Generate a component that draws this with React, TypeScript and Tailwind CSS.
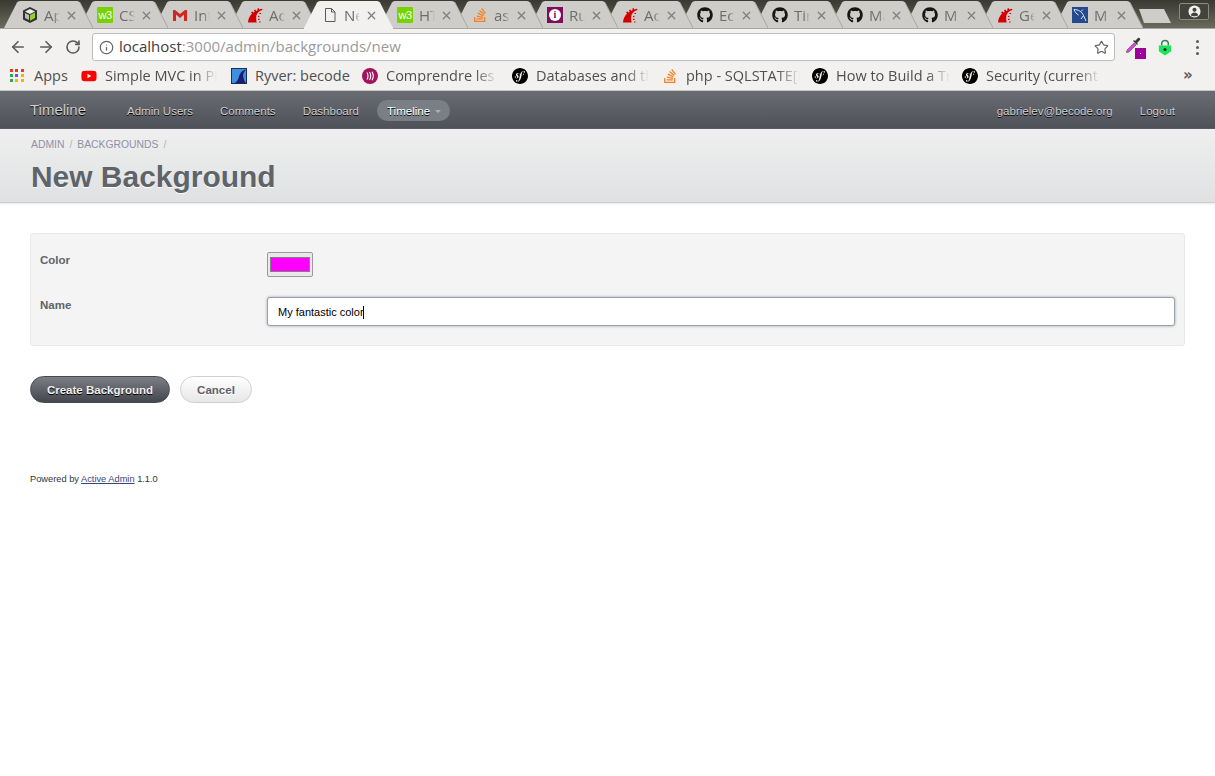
import React from "react";
import { ArrowLeft, ArrowRight, RotateCw, Info, Star, X } from "lucide-react";
import { FaGithub, FaStackOverflow, FaYoutube } from "react-icons/fa";
import { SiSymfony } from "react-icons/si";

const W3 = () => (
  <span className="flex h-4 w-4 items-center justify-center rounded-[1px] bg-[#76d300] text-[11px] leading-none tracking-[-0.5px] text-white [font-family:'Liberation_Sans',sans-serif]">w3</span>
);
const Gmail = () => (
  <svg viewBox="0 0 16 16" className="h-4 w-4">
    <path d="M1 3h2l5 4 5-4h2v11h-3V7.5L8 11 4 7.5V14H1z" fill="#d0281f" />
  </svg>
);
const Rails = () => (
  <svg viewBox="0 0 16 16" className="h-4 w-4">
    <path d="M1 15.5C1.3 11.5 3 8.5 5 6.6L4 5.2 5.4 4.4 6.6 5.6 7.6 4.9 7 3.2 8.5 2.5 9.2 4 10.5 3.3 10.4 1.6 12 1.2 12.2 2.6 15 1.8 15.6 2.9C12.3 3.7 10.3 5.6 9.5 8 8.9 10.6 9.1 13.2 9.7 15.5z" fill="#d30001" />
    <path d="M12.4 6.5h1.6M11 9.2l1.4.5M11 12.4h1.5M12 15h1.5" stroke="#d30001" strokeWidth="1.1" />
  </svg>
);
const Doc = () => (
  <svg viewBox="0 0 16 16" className="h-4 w-4" fill="none" stroke="#5a5a5a" strokeWidth="1">
    <path d="M3.5 1.5h6l3.5 3.5v9.5h-9.5zM9.5 1.5V5H13" />
  </svg>
);
const Box = () => (
  <svg viewBox="0 0 16 16" className="h-4 w-4">
    <path d="M8 0l7 3.5v9L8 16l-7-3.5v-9z" fill="#333" />
    <path d="M8 2l5 2.5L8 7 3 4.5z" fill="#eee" />
    <path d="M8 8l5-2.5v5.6L8 13.8z" fill="#9acd32" />
    <path d="M3 6l4 2v5l-4-2z" fill="#bbb" />
  </svg>
);
const InfoSq = () => (
  <span className="flex h-4 w-4 items-center justify-center bg-[#7b0f5e]">
    <span className="flex h-3 w-3 items-center justify-center rounded-full bg-white text-[10px] font-bold leading-none text-[#7b0f5e] [font-family:'Liberation_Serif',serif]">i</span>
  </span>
);
const Gh = () => <FaGithub className="h-4 w-4 text-[#161614]" />;
const My = () => (
  <svg viewBox="0 0 16 16" className="h-4 w-4">
    <rect width="16" height="16" fill="#234a8f" />
    <path d="M2 2.5C6 2.5 10 4.5 11.5 8.5L14 14M2 2.5C3 5 4.5 7 6.5 8M9 4.5L11 2.5M11.5 8.5L9 12" fill="none" stroke="#dfe6f2" strokeWidth="1" />
  </svg>
);
const So = () => <FaStackOverflow className="h-4 w-4 text-[#f48024]" />;

const tabs: { icon: React.ReactNode; t: string; active?: boolean }[] = [
  { icon: <Box />, t: "Ap" },
  { icon: <W3 />, t: "CS" },
  { icon: <Gmail />, t: "Int" },
  { icon: <Rails />, t: "Ac" },
  { icon: <Doc />, t: "Ne", active: true },
  { icon: <W3 />, t: "HT" },
  { icon: <So />, t: "as" },
  { icon: <InfoSq />, t: "Ru" },
  { icon: <Rails />, t: "Ac" },
  { icon: <Gh />, t: "Ec" },
  { icon: <Gh />, t: "Tir" },
  { icon: <Gh />, t: "Ma" },
  { icon: <Gh />, t: "M" },
  { icon: <Rails />, t: "Ge" },
  { icon: <My />, t: "M" },
];

function Tab({ icon, t, active, z }: { icon: React.ReactNode; t: string; active?: boolean; z: number }) {
  return (
    <div className="relative -mr-[14px] h-[28px] w-[89px] shrink-0" style={{ zIndex: z }}>
      <svg viewBox="0 0 89 28" className="absolute inset-0 h-full w-full">
        <path d="M0 28L13 2.5Q14 1 16 1H73Q75 1 76 2.5L89 28Z" fill={active ? "#f2f1f0" : "#cfcdca"} />
        {!active && <path d="M76 2.5L89 28" stroke="#a8a6a2" strokeWidth="1" fill="none" />}
      </svg>
      {active && <span className="absolute -bottom-px left-0 right-0 h-px bg-[#f2f1f0]" />}
      <div className="relative flex h-full items-center pl-[18px] pt-[2px]">
        <span className="flex h-4 w-4 shrink-0 items-center justify-center">{icon}</span>
        <span className="ml-[6px] w-[16px] overflow-hidden whitespace-nowrap text-[15px] leading-none text-[#6d6d6d] [font-family:'Open_Sans',sans-serif] [mask-image:linear-gradient(to_right,black_60%,transparent)]">{t}</span>
        <X className="ml-[5px] h-[13px] w-[13px] text-[#7d7d7d]" strokeWidth={2.2} />
      </div>
    </div>
  );
}

const AppsIcon = () => (
  <div className="grid h-[14px] w-[14px] grid-cols-3 gap-[2px]">
    {["#e33b2e", "#e33b2e", "#e33b2e", "#2fa84f", "#5b5be0", "#f5b400", "#2fa84f", "#f5b400", "#f5b400"].map((c, i) => (
      <span key={i} className="h-[3px] w-[3px]" style={{ background: c }} />
    ))}
  </div>
);

const Sym = () => <SiSymfony className="h-4 w-4 text-black" />;

function Bookmark({ icon, text, w, tw }: { icon: React.ReactNode; text: string; w: string; tw: string }) {
  return (
    <div className={`flex shrink-0 items-center ${w}`}>
      <span className="flex h-4 w-4 shrink-0 items-center justify-center">{icon}</span>
      <span className={`ml-[8px] overflow-hidden whitespace-nowrap text-[14.5px] text-[#4f4f4f] [font-family:'Open_Sans',sans-serif] ${tw}`}>{text}</span>
    </div>
  );
}

const FADE = "[mask-image:linear-gradient(to_right,black_80%,transparent)]";

export default function App() {
  return (
    <div className="min-h-screen bg-white text-[11.52px] text-[#323537] [font-family:'Liberation_Sans',Arial,sans-serif]">
      {/* Browser tab strip */}
      <div className="relative flex h-[29px] items-start border-b border-[#a9a7a4] bg-gradient-to-b from-[#3a3932] to-[#6a6a5c] pl-[4px]">
        {tabs.map((tb, i) => (
          <Tab key={i} icon={tb.icon} t={tb.t} active={tb.active} z={tb.active ? 50 : 40 - i} />
        ))}
        <svg viewBox="0 0 34 16" className="ml-[10px] mt-[8px] h-[16px] w-[34px] shrink-0">
          <path d="M0 1h25l7 14H5z" fill="#cfcdca" />
        </svg>
        <div className="ml-[6px] mt-[3px] flex h-[17px] w-[30px] shrink-0 items-center justify-center rounded-[2px] border border-[#8b8a80] bg-[#44433b]">
          <svg viewBox="0 0 14 14" className="h-[13px] w-[13px]">
            <circle cx="7" cy="7" r="6.5" fill="#f2f1f0" />
            <circle cx="7" cy="5.2" r="2.2" fill="#44433b" />
            <path d="M3 11c.6-2.2 2-3 4-3s3.4.8 4 3c-2 1.6-6 1.6-8 0z" fill="#44433b" />
          </svg>
        </div>
      </div>

      {/* Toolbar */}
      <div className="flex h-[34px] items-center bg-[#f2f1f0] pl-[9px] pr-[12px] pt-[2px]">
        <ArrowLeft className="h-[18px] w-[18px] text-[#5a5a5a]" strokeWidth={2.2} />
        <ArrowRight className="ml-[10px] h-[18px] w-[18px] text-[#5a5a5a]" strokeWidth={2.2} />
        <RotateCw className="ml-[10px] h-[16px] w-[16px] text-[#5a5a5a]" strokeWidth={2.4} />
        <div className="ml-[11px] flex h-[28px] w-[1023px] shrink-0 items-center rounded-[3px] border border-[#bdbdbd] bg-white pl-[6px] pr-[5px]">
          <Info className="h-[15px] w-[15px] text-[#666]" strokeWidth={2} />
          <span className="ml-[5px] pb-[1px] text-[15px] text-[#3c3c3c] [font-family:'Open_Sans',sans-serif]">
            localhost<span className="text-[#9a9a9a]">:3000/admin/backgrounds/new</span>
          </span>
          <Star className="ml-auto h-[15px] w-[15px] text-[#5f5f5f]" strokeWidth={1.8} />
        </div>
        <div className="relative ml-[10px] h-[22px] w-[20px]">
          <svg viewBox="0 0 18 18" className="h-[18px] w-[18px]">
            <path d="M1.5 16.5l.5-2.5 7-7 2 2-7 7z" fill="#e83ce8" stroke="#666" strokeWidth=".8" />
            <path d="M10 5l3-3c1-1 3 1 2 2l-3 3 1 1-1 1-4-4 1-1z" fill="#3a3a3a" />
          </svg>
          <span className="absolute bottom-[-1px] right-[-1px] flex h-[11px] w-[11px] items-center justify-center bg-[#a0009c]">
            <span className="h-[1px] w-[1px] bg-white" />
          </span>
        </div>
        <svg viewBox="0 0 14 18" className="ml-[13px] h-[17px] w-[14px]">
          <path d="M3.5 7V5a3.5 3.5 0 017 0v2" fill="none" stroke="#3f7f55" strokeWidth="1.6" />
          <path d="M0.5 7h13v6l-6.5 4.5L.5 13z" fill="#19e45a" />
          <circle cx="7" cy="11" r="1.6" fill="#222" />
        </svg>
        <div className="ml-[24px] flex flex-col gap-[3px]">
          <span className="h-[3px] w-[3px] rounded-full bg-[#5a5a5a]" />
          <span className="h-[3px] w-[3px] rounded-full bg-[#5a5a5a]" />
          <span className="h-[3px] w-[3px] rounded-full bg-[#5a5a5a]" />
        </div>
      </div>

      {/* Bookmarks */}
      <div className="flex h-[28px] items-center border-b border-[#c4c4c2] bg-[#f2f1f0] pb-[2px] pl-[9px]">
        <Bookmark icon={<AppsIcon />} text="Apps" w="w-[72px]" tw="pl-[1px]" />
        <Bookmark icon={<FaYoutube className="h-4 w-4 text-[#f00]" />} text="Simple MVC in PHP" w="w-[150px]" tw={`w-[112px] ${FADE}`} />
        <Bookmark
          icon={
            <svg viewBox="0 0 16 16" className="h-4 w-4">
              <rect x=".5" y=".5" width="15" height="15" fill="#3d8fe0" stroke="#16305c" />
              <path d="M3 15C6.5 14.5 7.5 10 8.5 7 9.5 4.5 11.5 2 15 1.5 12.5 4 11.5 7 12.5 10 13 12.5 14 14 15 15z" fill="#1d1d70" />
            </svg>
          }
          text="Ryver: becode"
          w="w-[131px]"
          tw=""
        />
        <Bookmark
          icon={
            <svg viewBox="0 0 16 16" className="h-4 w-4" fill="none" stroke="#fff" strokeWidth="1.1">
              <circle cx="8" cy="8" r="8" fill="#a3145f" stroke="none" />
              <path d="M5 4.5c1.4 2.4 1.4 4.6 0 7M7.5 4c1.6 2.6 1.6 5.4 0 8M10 3.8c1.8 2.8 1.8 5.6 0 8.4" />
            </svg>
          }
          text="Comprendre les fonctions"
          w="w-[150px]"
          tw={`w-[112px] ${FADE}`}
        />
        <Bookmark icon={<Sym />} text="Databases and the Doctrine" w="w-[150px]" tw={`w-[113px] ${FADE}`} />
        <Bookmark icon={<So />} text="php - SQLSTATE[HY000]" w="w-[150px]" tw={`w-[114px] ${FADE}`} />
        <Bookmark icon={<Sym />} text="How to Build a Traditional" w="w-[150px]" tw={`w-[114px] ${FADE}`} />
        <Bookmark icon={<Sym />} text="Security (current version)" w="w-[150px]" tw={`w-[114px] ${FADE}`} />
        <span className="ml-[71px] text-[15px] font-bold leading-none text-[#5a5a5a] [font-family:'DejaVu_Sans',sans-serif]">»</span>
      </div>

      {/* Admin header */}
      <header className="flex h-[38px] items-center bg-gradient-to-b from-[#6a6c73] to-[#4e5159] pl-[30px] pr-[40px] pt-[1px] text-[#cdcdcd] [text-shadow:0_1px_0_#000]">
        <span className="text-[14.98px]">Timeline</span>
        <nav className="ml-[41px] flex items-center">
          <span className="pt-[3px]">Admin Users</span>
          <span className="ml-[27px] pt-[3px]">Comments</span>
          <span className="ml-[27px] pt-[3px]">Dashboard</span>
          <span className="ml-[18px] flex h-[21px] items-center rounded-full bg-[#7a7e85] pl-[10px] pr-[9px] pt-[2px] text-white">
            Timeline
            <span className="ml-[5px] h-0 w-0 border-x-[3px] border-t-[3px] border-x-transparent border-t-[#aeb0b4]" />
          </span>
        </nav>
        <span className="ml-auto pt-[3px]">gabrielev@becode.org</span>
        <span className="ml-[27px] pt-[3px]">Logout</span>
      </header>

      {/* Title bar */}
      <div className="h-[74px] border-b border-[#cdcdcd] bg-gradient-to-b from-[#efefef] to-[#dfe1e2] pl-[31px] pt-[8px] shadow-[0_1px_2px_#e8e8e8]">
        <div className="flex items-center text-[10.37px] uppercase text-[#8a949e]">
          <span className="text-[#8f92a6]">Admin</span>
          <span className="mx-[5px] text-[#b0b3b8]">/</span>
          <span className="text-[#8f92a6]">Backgrounds</span>
          <span className="mx-[5px] text-[#b0b3b8]">/</span>
        </div>
        <h2 className="mt-[5px] text-[29.95px] font-bold leading-[37px] text-[#5e6469] [text-shadow:0_1px_0_#fff]">New Background</h2>
      </div>

      {/* Form */}
      <main className="px-[30px] pt-[30px]">
        <div className="h-[113px] rounded-[3px] border border-[#e8e8e8] bg-[#f4f4f4] pl-[9px] pr-[9px] pt-[18px]">
          <div className="flex h-[45px] items-start">
            <label className="w-[227px] font-bold text-[#5e6469]">Color</label>
            <div className="flex h-[25px] w-[46px] items-center justify-center rounded-[2px] border border-[#9a9a9a] bg-[#e9e9e9]">
              <span className="h-[15px] w-[40px] border border-[#808080] bg-[#ff00ff]" />
            </div>
          </div>
          <div className="flex items-start">
            <label className="w-[227px] font-bold text-[#5e6469]">Name</label>
            <div className="flex h-[29px] flex-1 items-center rounded-[3px] border border-[#9ba0ad] bg-white pl-[10px] pt-[1px] text-[11px] text-black shadow-[0_0_3px_#9ba0ad]">
              My fantastic color<span className="-ml-[1px] h-[13px] w-[1px] bg-black" />
            </div>
          </div>
        </div>

        <div className="mt-[30px] flex items-center gap-[10px]">
          <button className="flex h-[27px] w-[140px] items-center justify-center rounded-full border border-[#454a52] bg-gradient-to-b from-[#7d7f85] to-[#45474f] pt-[2px] font-bold text-[#efefef] [text-shadow:0_1px_0_#000]">
            Create Background
          </button>
          <button className="flex h-[27px] w-[72px] items-center justify-center rounded-full border border-[#d0d0d0] bg-gradient-to-b from-white to-[#e7e7e7] pt-[2px] font-bold text-[#5e6469] [text-shadow:0_1px_0_#fff]">
            Cancel
          </button>
        </div>

        <p className="mt-[70px] text-[9.28px] text-[#323537]">
          Powered by <a className="text-[#38457a] underline">Active Admin</a> 1.1.0
        </p>
      </main>
    </div>
  );
}
